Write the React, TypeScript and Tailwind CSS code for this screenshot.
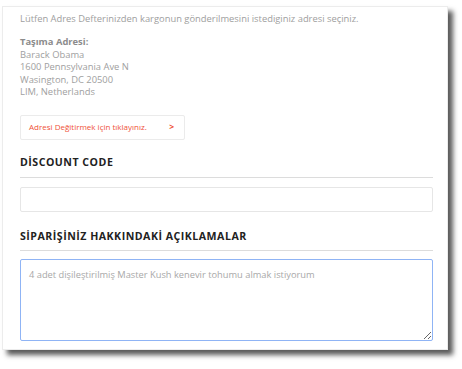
export default function App() {
  return (
    <div className="w-[462px] h-[369px] bg-white pt-[6px] pl-[2px]" style={{ fontFamily: '"Open Sans", sans-serif' }}>
      <div className="w-[446px] h-[344px] bg-white border border-[#ececec] shadow-[5px_5px_5px_rgba(0,0,0,0.65)] pl-[17px] pr-[14px] pt-[5px]">
        <p className="text-[9.4px] leading-[13px] text-[#a0a0a0]">
          Lütfen Adres Defterinizden kargonun gönderilmesini istediginiz adresi seçiniz.
        </p>

        <div className="mt-[11px] text-[9.4px] leading-[12.6px] text-[#a0a0a0]">
          <div className="font-bold text-[#8c8c8c]">Taşıma Adresi:</div>
          <div>Barack Obama</div>
          <div>1600 Pennsylvania Ave N</div>
          <div>Wasington, DC 20500</div>
          <div>LIM, Netherlands</div>
        </div>

        <button className="mt-[16px] flex items-center justify-between w-[165px] h-[25px] pl-[8px] pr-[10px] border border-[#ebebeb] rounded-[2px] text-[8px] text-[#ef5238] whitespace-nowrap text-left">
          <span>Adresi Değitirmek için tıklayınız.</span>
          <span className="font-bold text-[8.5px]">&gt;</span>
        </button>

        <h2 className="mt-[15px] text-[10.6px] leading-[14px] font-bold tracking-[0.5px] text-[#222]">DİSCOUNT CODE</h2>
        <div className="mt-[8px] border-t border-[#dcdcdc]" />
        <div className="mt-[9px] h-[25px] border border-[#e6e6e6] rounded-[2px]" />

        <h2 className="mt-[17px] text-[10.6px] leading-[14px] font-bold tracking-[0.5px] text-[#222]">SİPARİŞİNİZ HAKKINDAKİ AÇIKLAMALAR</h2>
        <div className="mt-[7px] border-t border-[#dcdcdc]" />
        <textarea
          className="mt-[8px] block w-full h-[82px] border border-[#8fb4f5] rounded-[2px] px-[8px] py-[8px] text-[9.3px] outline-none resize-y placeholder:text-[#a8a8a8]"
          placeholder="4 adet dişileştirilmiş Master Kush kenevir tohumu almak istiyorum"
        />
      </div>
    </div>
  );
}
